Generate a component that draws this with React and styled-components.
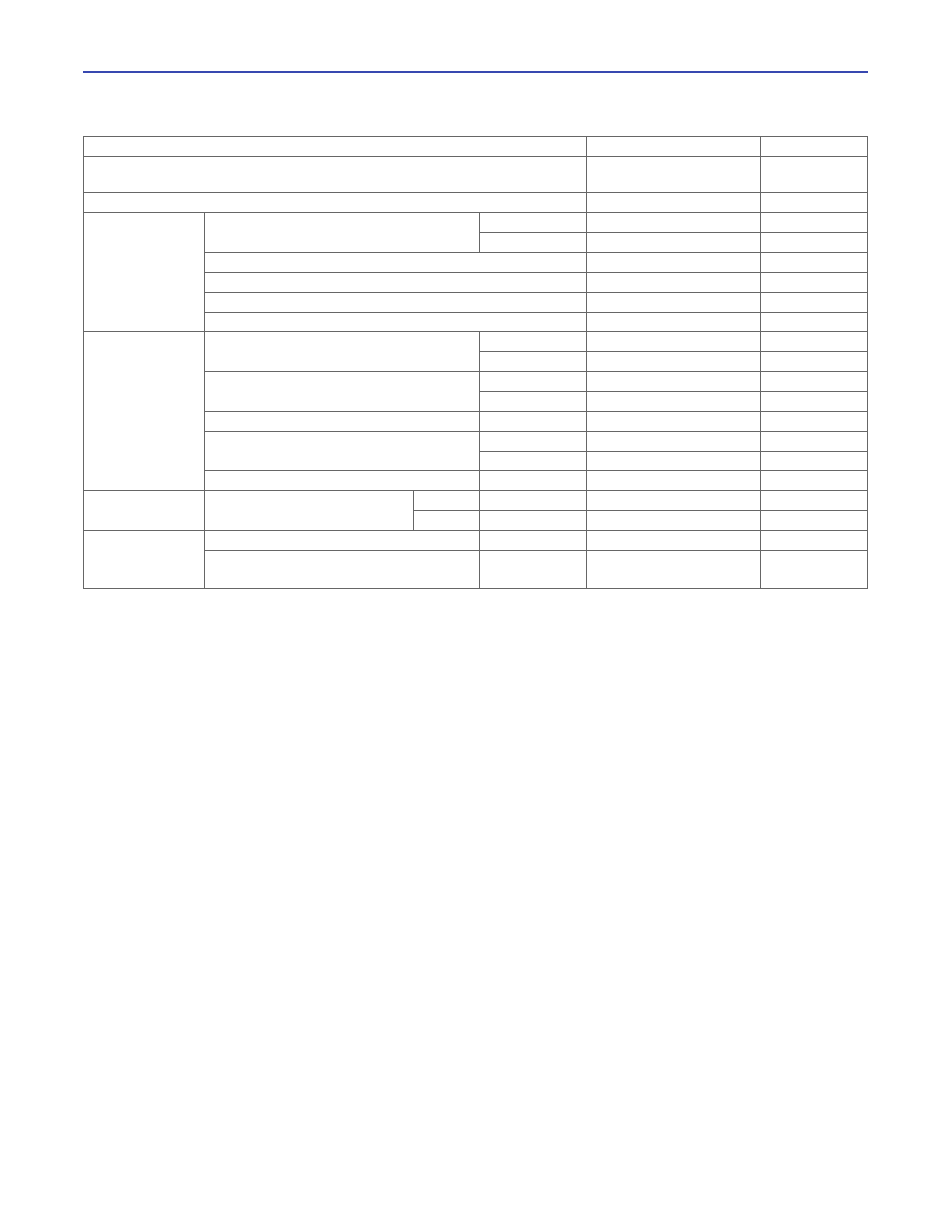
import React from "react";
import styled, { createGlobalStyle } from "styled-components";

const GlobalStyle = createGlobalStyle`
  html, body {
    margin: 0;
    padding: 0;
    background: #ffffff;
    font-family: "Liberation Sans", Arial, sans-serif;
  }
`;

const Page = styled.div`
  width: 930px;
  min-height: 1211px;
  padding: 71px 0 0 83px;
  box-sizing: border-box;
`;

const Rule = styled.div`
  width: 785px;
  height: 2px;
  background: #3848b0;
`;

const Grid = styled.table`
  margin-top: 63px;
  width: 785px;
  border-collapse: collapse;
  table-layout: fixed;
`;

const Row = styled.tr`
  height: ${(p) => p.h}px;
`;

const Cell = styled.td`
  border: 1px solid #666666;
  padding: 0;
  font-size: 12px;
  color: #222;
`;

const widths = [121, 209, 66, 107, 174, 107];

// each row: height + cells [colSpan, rowSpan]
const rows = [
  [20, [[4, 1], [1, 1], [1, 1]]],
  [36, [[4, 1], [1, 1], [1, 1]]],
  [20, [[4, 1], [1, 1], [1, 1]]],
  [20, [[1, 6], [2, 2], [1, 1], [1, 1], [1, 1]]],
  [20, [[1, 1], [1, 1], [1, 1]]],
  [20, [[3, 1], [1, 1], [1, 1]]],
  [20, [[3, 1], [1, 1], [1, 1]]],
  [20, [[3, 1], [1, 1], [1, 1]]],
  [19, [[3, 1], [1, 1], [1, 1]]],
  [20, [[1, 8], [2, 2], [1, 1], [1, 1], [1, 1]]],
  [20, [[1, 1], [1, 1], [1, 1]]],
  [20, [[2, 2], [1, 1], [1, 1], [1, 1]]],
  [20, [[1, 1], [1, 1], [1, 1]]],
  [20, [[2, 1], [1, 1], [1, 1], [1, 1]]],
  [20, [[2, 2], [1, 1], [1, 1], [1, 1]]],
  [19, [[1, 1], [1, 1], [1, 1]]],
  [20, [[2, 1], [1, 1], [1, 1], [1, 1]]],
  [20, [[1, 2], [1, 2], [1, 1], [1, 1], [1, 1], [1, 1]]],
  [20, [[1, 1], [1, 1], [1, 1], [1, 1]]],
  [20, [[1, 2], [2, 1], [1, 1], [1, 1], [1, 1]]],
  [38, [[2, 1], [1, 1], [1, 1], [1, 1]]],
];

export default function App() {
  return (
    <>
      <GlobalStyle />
      <Page>
        <Rule />
        <Grid>
          <colgroup>
            {widths.map((w, i) => (
              <col key={i} style={{ width: w }} />
            ))}
          </colgroup>
          <tbody>
            {rows.map(([h, cells], r) => (
              <Row key={r} h={h}>
                {cells.map(([cs, rs], c) => (
                  <Cell key={c} colSpan={cs} rowSpan={rs} />
                ))}
              </Row>
            ))}
          </tbody>
        </Grid>
      </Page>
    </>
  );
}
